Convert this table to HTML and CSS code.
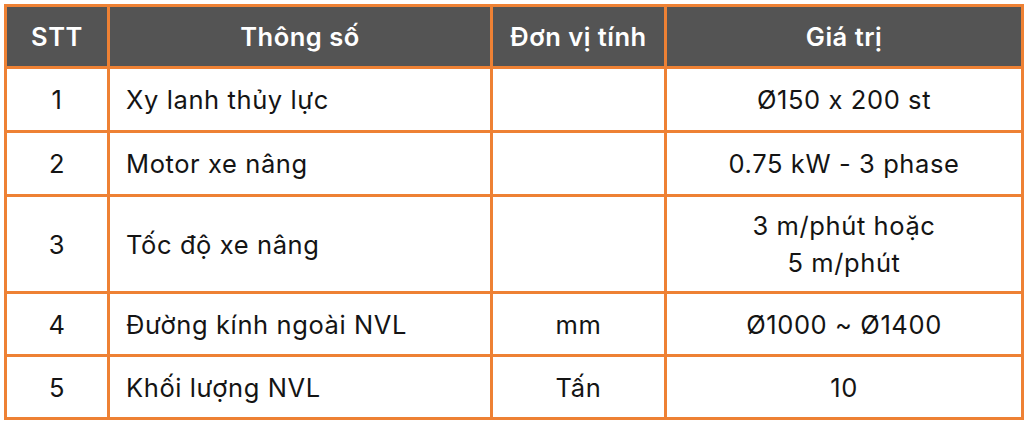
FILE: index.html
```html
<!DOCTYPE html>
<html lang="vi">
<head>
<meta charset="utf-8">
<link rel="stylesheet" href="styles.css">
</head>
<body>
<table class="spec">
  <colgroup>
    <col class="c-stt">
    <col class="c-name">
    <col class="c-unit">
    <col class="c-val">
  </colgroup>
  <thead>
    <tr class="head">
      <th>STT</th>
      <th>Thông số</th>
      <th>Đơn vị tính</th>
      <th>Giá trị</th>
    </tr>
  </thead>
  <tbody>
    <tr class="r1">
      <td class="ctr">1</td>
      <td class="name">Xy lanh thủy lực</td>
      <td class="ctr"></td>
      <td class="ctr">Ø150 x 200 st</td>
    </tr>
    <tr class="r2">
      <td class="ctr">2</td>
      <td class="name">Motor xe nâng</td>
      <td class="ctr"></td>
      <td class="ctr">0.75 kW - 3 phase</td>
    </tr>
    <tr class="r3">
      <td class="ctr">3</td>
      <td class="name">Tốc độ xe nâng</td>
      <td class="ctr"></td>
      <td class="ctr">3 m/phút hoặc<br>5 m/phút</td>
    </tr>
    <tr class="r4">
      <td class="ctr">4</td>
      <td class="name">Đường kính ngoài NVL</td>
      <td class="ctr">mm</td>
      <td class="ctr">Ø1000 ~ Ø1400</td>
    </tr>
    <tr class="r5">
      <td class="ctr">5</td>
      <td class="name">Khối lượng NVL</td>
      <td class="ctr">Tấn</td>
      <td class="ctr">10</td>
    </tr>
  </tbody>
</table>
</body>
</html>
```

FILE: styles.css
```css
html, body {
  margin: 0;
  background: #ffffff;
}
body {
  padding: 4px 3px 0 4px;
  font-family: Inter, "Noto Sans", "Liberation Sans", sans-serif;
  font-feature-settings: "calt" 0;
}
.spec {
  width: 1017px;
  border-collapse: collapse;
  table-layout: fixed;
  border: 3px solid #ee8134;
  color: #141414;
}
.c-stt { width: 103px; }
.c-name { width: 383px; }
.c-unit { width: 174px; }
.c-val { width: 357px; }
.spec th, .spec td {
  border: 3px solid #ee8134;
  padding: 0 8px;
  font-size: 25.5px;
  line-height: 37px;
  letter-spacing: 0.6px;
  vertical-align: middle;
}
.spec th {
  background: #545454;
  color: #ffffff;
  font-weight: 600;
  font-size: 25.5px;
  letter-spacing: 0.5px;
  text-align: center;
}
.head { height: 62px; }
.r1, .r2 { height: 64px; }
.r3 { height: 97px; }
.r4 { height: 63px; }
.r5 { height: 63px; }
.ctr { text-align: center; }
.spec td.name {
  text-align: left;
  padding-left: 16px;
}
```
